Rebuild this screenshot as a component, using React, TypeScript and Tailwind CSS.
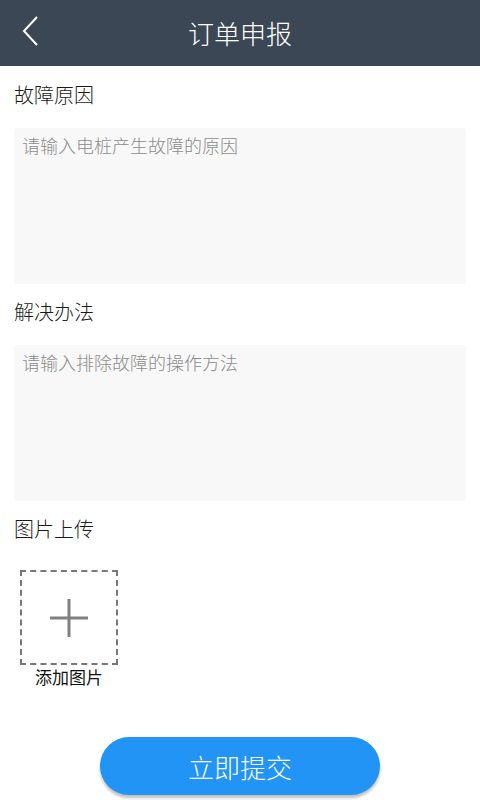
import React from 'react';

const font = { fontFamily: '"Noto Sans CJK SC", "Noto Sans", sans-serif' };

export default function App() {
  return (
    <div className="w-[480px] h-[800px] bg-white flex flex-col overflow-hidden font-light" style={font}>
      <div className="h-[66px] bg-[#3b4754] flex items-center relative shrink-0">
        <svg className="absolute left-[20px] top-[15px]" width="20" height="32" viewBox="0 0 20 32">
          <path d="M17 2 L4 16 L17 30" fill="none" stroke="#ffffff" strokeWidth="2" />
        </svg>
        <div className="flex-1 text-center text-white text-[26px] leading-none">订单申报</div>
      </div>

      <div className="px-[14px] flex flex-col">
        <div className="mt-[16px] text-[20px] leading-[26px] text-[#1a1a1a]">故障原因</div>
        <textarea
          className="mt-[20px] h-[156px] bg-[#f8f8f8] rounded-[3px] px-[8px] py-[4px] text-[18px] resize-none outline-none placeholder:text-[#8c8c8c]"
          placeholder="请输入电桩产生故障的原因"
        />
        <div className="mt-[15px] text-[20px] leading-[26px] text-[#1a1a1a]">解决办法</div>
        <textarea
          className="mt-[20px] h-[156px] bg-[#f8f8f8] rounded-[3px] px-[8px] py-[4px] text-[18px] resize-none outline-none placeholder:text-[#8c8c8c]"
          placeholder="请输入排除故障的操作方法"
        />
        <div className="mt-[15px] text-[20px] leading-[26px] text-[#1a1a1a]">图片上传</div>
        <div className="mt-[28px] ml-[6px] w-[98px] flex flex-col items-center">
          <div className="w-[98px] h-[95px] border-2 border-dashed border-[#777] flex items-center justify-center">
            <svg width="40" height="40" viewBox="0 0 40 40">
              <path d="M20 1 V39 M1 20 H39" stroke="#808080" strokeWidth="3" />
            </svg>
          </div>
          <div className="mt-[1px] text-[17px] leading-[22px] text-[#111] font-normal">添加图片</div>
        </div>
      </div>

      <div className="flex justify-center mt-[49px]">
        <button className="w-[280px] h-[58px] rounded-full bg-[#2194f5] text-white text-[26px] shadow-[0_3px_3px_rgba(0,0,0,0.25)]">
          立即提交
        </button>
      </div>
    </div>
  );
}
